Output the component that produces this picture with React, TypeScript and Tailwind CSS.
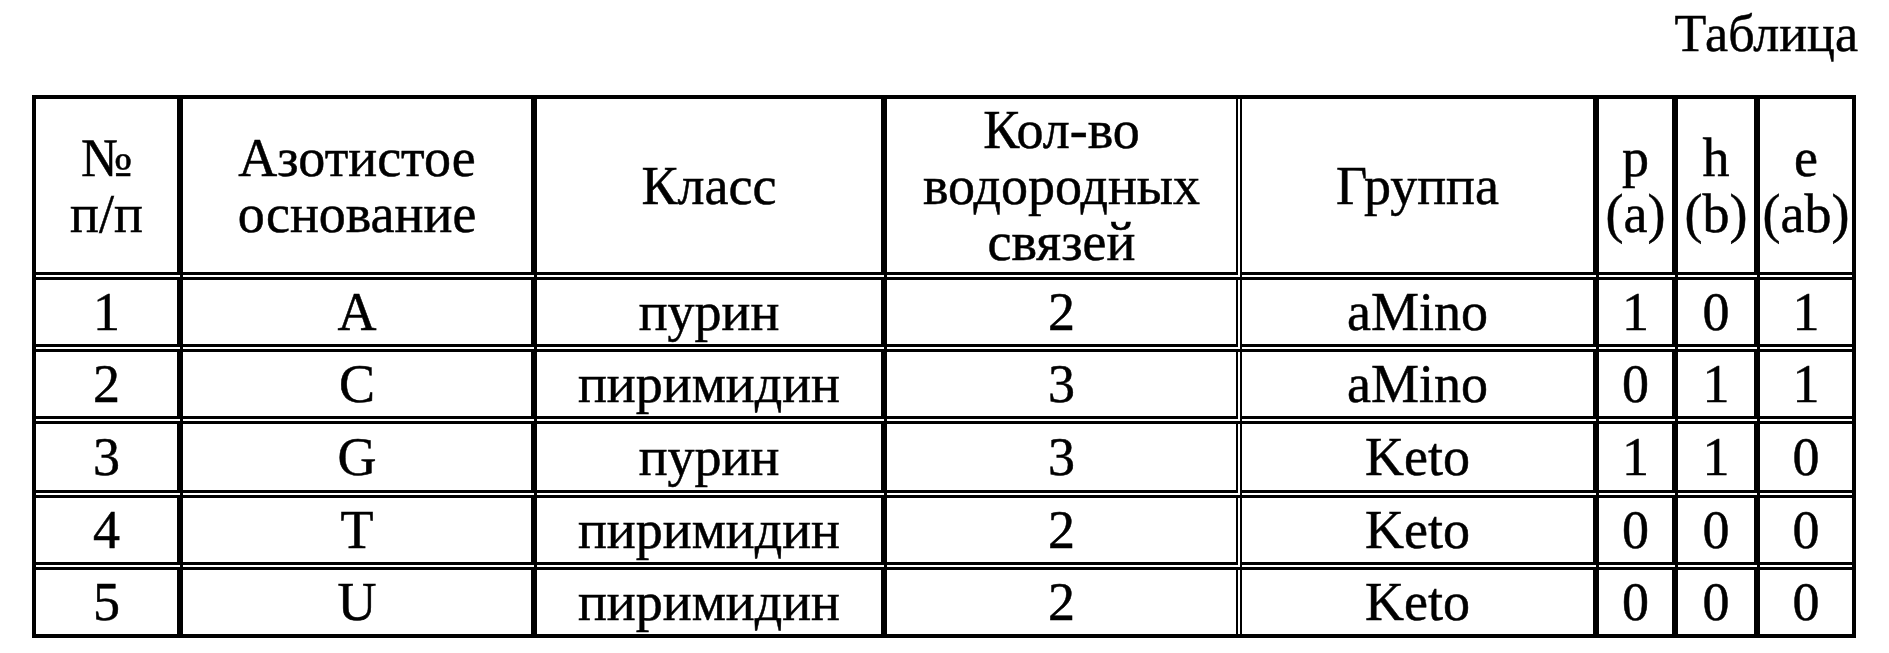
import React from 'react';

const rows = [
  { n: '1', base: 'A', cls: 'пурин', bonds: '2', group: 'aMino', p: '1', h: '0', e: '1' },
  { n: '2', base: 'C', cls: 'пиримидин', bonds: '3', group: 'aMino', p: '0', h: '1', e: '1' },
  { n: '3', base: 'G', cls: 'пурин', bonds: '3', group: 'Keto', p: '1', h: '1', e: '0' },
  { n: '4', base: 'T', cls: 'пиримидин', bonds: '2', group: 'Keto', p: '0', h: '0', e: '0' },
  { n: '5', base: 'U', cls: 'пиримидин', bonds: '2', group: 'Keto', p: '0', h: '0', e: '0' },
];

const rowHeights = ['h-[72px]', 'h-[72px]', 'h-[74px]', 'h-[72px]', 'h-[64px]'];

// правая рамка каждой колонки
const cellBorders = [
  'border-r-[6px] border-r-black',
  'border-r-[6px] border-r-black',
  'border-r-[6px] border-r-black',
  'border-r-[6px] border-r-black [border-right-style:double]',
  'border-r-[6px] border-r-black',
  'border-r-[6px] border-r-black',
  'border-r-[6px] border-r-black',
  '',
];

const Cell: React.FC<{ i: number; last?: boolean; children: React.ReactNode }> = ({ i, last, children }) => (
  <div
    className={
      'flex items-center justify-center text-center whitespace-nowrap ' +
      cellBorders[i] +
      (last ? '' : ' border-b-[8px] border-b-black [border-bottom-style:double]')
    }
  >
    {children}
  </div>
);

export default function App() {
  return (
    <div className="bg-white text-black min-h-[653px] pt-[4px] font-['Liberation_Serif','Times_New_Roman',serif] [-webkit-text-stroke:0.5px_black]">
      <div className="text-right pr-[31px] text-[52px] leading-[60px] h-[91px]">Таблица</div>
      <div className="ml-[32px] w-[1824px] border-[4px] border-black text-[54px] leading-[56px]">
        <div className="grid grid-cols-[147px_354px_350px_355px_357px_79px_82px_92px] grid-rows-[181px]">
          <Cell i={0}>
            <span>
              №<br />п/п
            </span>
          </Cell>
          <Cell i={1}>
            <span>
              Азотистое
              <br />
              основание
            </span>
          </Cell>
          <Cell i={2}>Класс</Cell>
          <Cell i={3}>
            <span>
              Кол-во
              <br />
              водородных
              <br />
              связей
            </span>
          </Cell>
          <Cell i={4}>Группа</Cell>
          <Cell i={5}>
            <span>
              p<br />(a)
            </span>
          </Cell>
          <Cell i={6}>
            <span>
              h<br />(b)
            </span>
          </Cell>
          <Cell i={7}>
            <span>
              e<br />(ab)
            </span>
          </Cell>
        </div>
        {rows.map((r, idx) => {
          const last = idx === rows.length - 1;
          return (
            <div
              key={r.n}
              className={'grid grid-cols-[147px_354px_350px_355px_357px_79px_82px_92px] ' + rowHeights[idx]}
            >
              <Cell i={0} last={last}>{r.n}</Cell>
              <Cell i={1} last={last}>{r.base}</Cell>
              <Cell i={2} last={last}>{r.cls}</Cell>
              <Cell i={3} last={last}>{r.bonds}</Cell>
              <Cell i={4} last={last}>{r.group}</Cell>
              <Cell i={5} last={last}>{r.p}</Cell>
              <Cell i={6} last={last}>{r.h}</Cell>
              <Cell i={7} last={last}>{r.e}</Cell>
            </div>
          );
        })}
      </div>
    </div>
  );
}
